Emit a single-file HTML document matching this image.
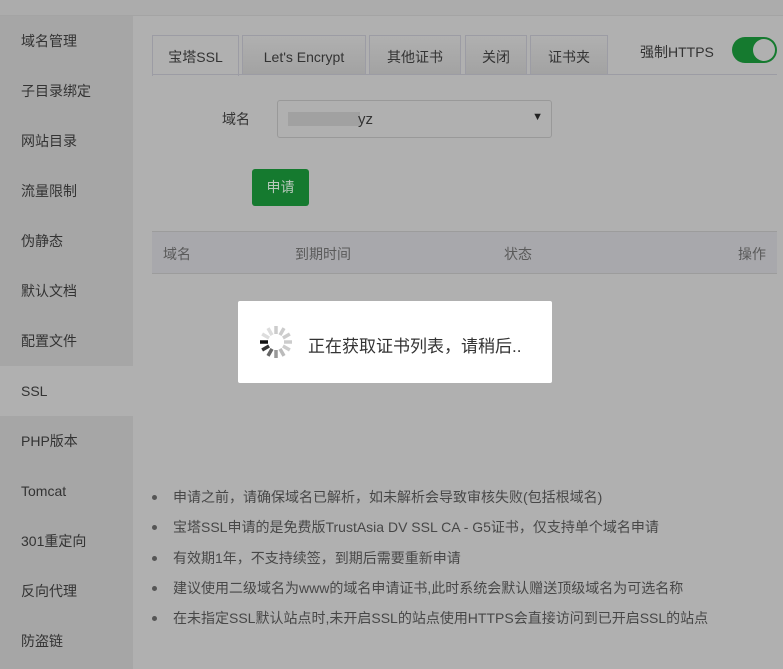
<!DOCTYPE html>
<html><head><meta charset="utf-8"><style>
*{margin:0;padding:0;box-sizing:border-box}
body{width:783px;height:669px;overflow:hidden;background:#b0b0b0;font-family:"Liberation Sans","Noto Sans CJK SC",sans-serif;position:relative;color:#3a3a3a}
.top{position:absolute;left:0;top:0;width:783px;height:16px;background:#acacac;border-bottom:1px solid #a4a4a4}
.side{position:absolute;left:0;top:16px;width:133px;height:653px;background:#a6a6a6}
.side div{height:50px;line-height:50px;padding-left:21px;font-size:14px;color:#333}
.side .on{background:#b0b0b0}
.tab{position:absolute;top:35px;height:40px;line-height:42px;text-align:center;font-size:14px;border:1px solid #9c9ca4;border-bottom:none;background:linear-gradient(#b0b0b0,#a2a2a2);color:#333}
.tab.on{background:#b0b0b0;height:41px}
.line{position:absolute;left:152px;top:74px;width:625px;height:1px;background:#9c9ca4}
.abs{position:absolute}
li{list-style:none;position:relative;height:30.3px;font-size:14px;color:#474747;padding-left:21px}
li:before{content:"";position:absolute;left:0;top:8px;width:5px;height:5px;border-radius:50%;background:#555}
</style></head><body>
<div class="top"></div>
<div class="side">
<div>域名管理</div><div>子目录绑定</div><div>网站目录</div><div>流量限制</div><div>伪静态</div><div>默认文档</div><div>配置文件</div><div class="on">SSL</div><div>PHP版本</div><div>Tomcat</div><div>301重定向</div><div>反向代理</div><div>防盗链</div>
</div>
<div class="tab on" style="left:152px;width:87px">宝塔SSL</div>
<div class="tab" style="left:242px;width:124px">Let's Encrypt</div>
<div class="tab" style="left:369px;width:92px">其他证书</div>
<div class="tab" style="left:465px;width:62px">关闭</div>
<div class="tab" style="left:530px;width:78px">证书夹</div>
<div class="line"></div>
<div class="abs" style="left:640px;top:42px;font-size:14px;color:#333">强制HTTPS</div>
<div class="abs" style="left:732px;top:37px;width:45px;height:26px;border-radius:13px;background:#157a2f"><div style="position:absolute;right:2px;top:2px;width:22px;height:22px;border-radius:50%;background:#b0b0b0"></div></div>
<div class="abs" style="left:222px;top:109px;font-size:14px;color:#333">域名</div>
<div class="abs" style="left:277px;top:100px;width:275px;height:38px;border:1px solid #999;border-radius:3px;background:#b0b0b0">
<div class="abs" style="left:10px;top:11px;width:72px;height:14px;background:#9e9e9e;opacity:.8"></div>
<div class="abs" style="left:80px;top:10px;font-size:15px;color:#333">yz</div>
<div class="abs" style="right:8px;top:10px;font-size:11px;color:#222">▼</div></div>
<div class="abs" style="left:252px;top:169px;width:57px;height:37px;background:#157a2f;border-radius:3px;color:#b8c8bb;font-size:14px;text-align:center;line-height:37px">申请</div>
<div class="abs" style="left:152px;top:231px;width:625px;height:43px;background:#a8a8ac;border-top:1px solid #9c9c9c;border-bottom:1px solid #9c9c9c;font-size:14px;color:#5a5a5a">
<span class="abs" style="left:11px;top:12px">域名</span><span class="abs" style="left:143px;top:12px">到期时间</span><span class="abs" style="left:352px;top:12px">状态</span><span class="abs" style="right:11px;top:12px">操作</span></div>
<div class="abs" style="left:238px;top:301px;width:314px;height:82px;background:#fff;border-radius:2px">
<svg class="abs" style="left:19px;top:22px" width="38" height="38" viewBox="-19 -19 38 38">
<g stroke-width="3.5" stroke-linecap="butt">
<line x1="0" y1="-8" x2="0" y2="-16" stroke="#ccc" transform="rotate(0)"/>
<line x1="0" y1="-8" x2="0" y2="-16" stroke="#ccc" transform="rotate(30)"/>
<line x1="0" y1="-8" x2="0" y2="-16" stroke="#ccc" transform="rotate(60)"/>
<line x1="0" y1="-8" x2="0" y2="-16" stroke="#ccc" transform="rotate(90)"/>
<line x1="0" y1="-8" x2="0" y2="-16" stroke="#ccc" transform="rotate(120)"/>
<line x1="0" y1="-8" x2="0" y2="-16" stroke="#bbb" transform="rotate(150)"/>
<line x1="0" y1="-8" x2="0" y2="-16" stroke="#999" transform="rotate(180)"/>
<line x1="0" y1="-8" x2="0" y2="-16" stroke="#666" transform="rotate(210)"/>
<line x1="0" y1="-8" x2="0" y2="-16" stroke="#333" transform="rotate(240)"/>
<line x1="0" y1="-8" x2="0" y2="-16" stroke="#111" transform="rotate(270)"/>
<line x1="0" y1="-8" x2="0" y2="-16" stroke="#ddd" transform="rotate(300)"/>
<line x1="0" y1="-8" x2="0" y2="-16" stroke="#ddd" transform="rotate(330)"/>
</g></svg>
<div class="abs" style="left:70px;top:31px;font-size:17px;color:#333">正在获取证书列表，请稍后..</div></div>
<ul class="abs" style="left:152px;top:487px">
<li>申请之前，请确保域名已解析，如未解析会导致审核失败(包括根域名)</li>
<li>宝塔SSL申请的是免费版TrustAsia DV SSL CA - G5证书，仅支持单个域名申请</li>
<li>有效期1年，不支持续签，到期后需要重新申请</li>
<li>建议使用二级域名为www的域名申请证书,此时系统会默认赠送顶级域名为可选名称</li>
<li>在未指定SSL默认站点时,未开启SSL的站点使用HTTPS会直接访问到已开启SSL的站点</li>
</ul>
</body></html>
